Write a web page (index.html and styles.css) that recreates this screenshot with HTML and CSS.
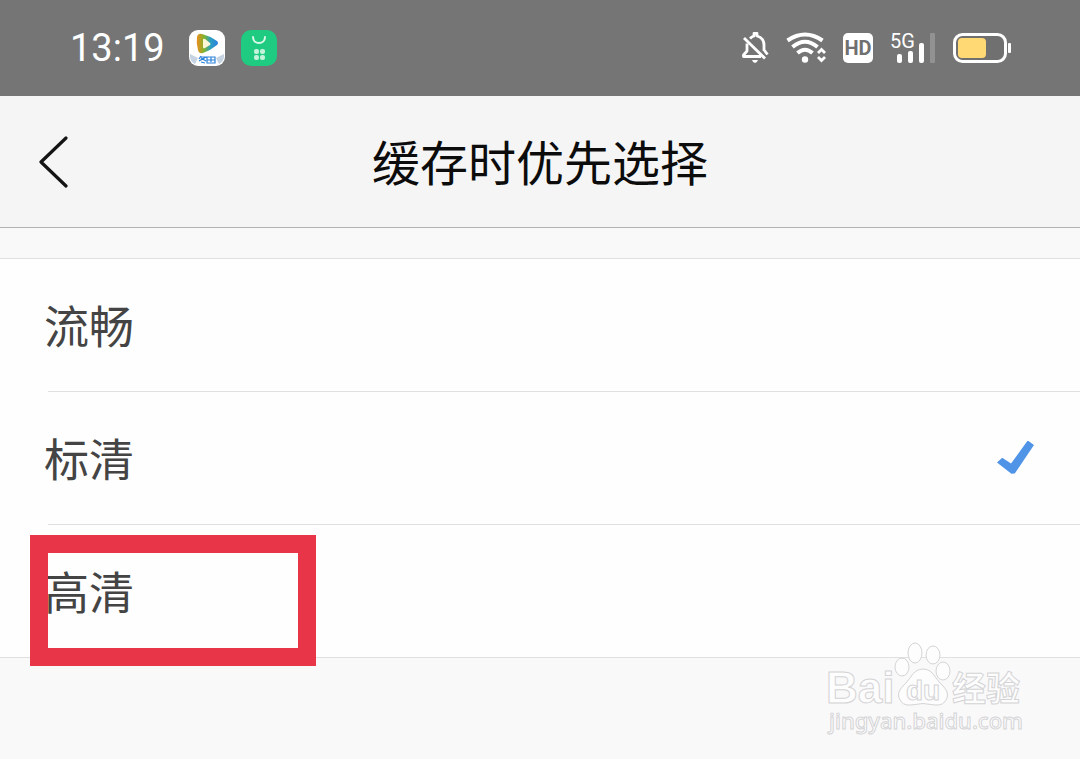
FILE: index.html
```html
<!DOCTYPE html>
<html lang="zh-CN">
<head>
    <meta charset="UTF-8">
    <meta name="viewport" content="width=device-width, initial-scale=1.0">
    <title>缓存时优先选择</title>
    <link rel="stylesheet" href="styles.css">
</head>
<body>
    <!-- Phone status bar -->
    <div class="status-bar">
        <span class="clock">13:19</span>
        <svg class="app-icon" width="36" height="36" viewBox="0 0 36 36">
            <defs>
                <linearGradient id="play" x1="0" y1="0" x2="1" y2="0">
                    <stop offset="0" stop-color="#f08a1c"/>
                    <stop offset="0.35" stop-color="#7fb52e"/>
                    <stop offset="0.65" stop-color="#2c9fc0"/>
                    <stop offset="1" stop-color="#2d7fe0"/>
                </linearGradient>
            </defs>
            <rect width="36" height="36" rx="9" fill="#fff"/>
            <path d="M1 24l8 4-3 6a9 9 0 0 1-5-7zM35 24l-8 4 3 6a9 9 0 0 0 5-7z" fill="#c5d3e2"/>
            <path d="M8 7q1-4 5-3 8 2 15 7 2 2 0 4-6 5-14 8-4 1-5-3-2-7-1-13z" fill="url(#play)"/>
            <path d="M14 10q0-2 2-1l5 4q1 1 0 2l-5 3q-2 1-2-1z" fill="#fff6d8"/>
            <path d="M12 26l-2 3M11 27h6l-7 4M12 28l5 3M12 32l4 1M18 27h8v6h-8zM18 30h8M22 27v5" fill="none" stroke="#2a82d8" stroke-width="1.200"/>
        </svg>
        <svg class="app-icon" width="36" height="36" viewBox="0 0 36 36">
            <rect width="36" height="36" rx="10" fill="#1ecb80"/>
            <path d="M12 7c0 8 12 8 12 0" fill="none" stroke="#d8f8e8" stroke-width="2" stroke-linecap="round"/>
            <g fill="#c4f3dc">
                <rect x="13" y="19" width="5" height="5" rx="2"/>
                <rect x="19" y="19" width="5" height="5" rx="2"/>
                <rect x="13" y="25" width="5" height="5" rx="2"/>
                <rect x="19" y="25" width="5" height="5" rx="2"/>
            </g>
        </svg>

        <div class="indicators">
            <svg width="28" height="32" viewBox="0 0 28 32" fill="none" stroke="#fff" stroke-width="2.800">
                <path d="M9 6.500q2-2 4-2.500V1.500h3V4q7 2 7 9v6M6 11.500V19l-3.500 4v1.500H20M26.500 22.500l-3-4" stroke-linejoin="round"/>
                <path d="M3 6l21 20.500" stroke-width="2.800"/>
                <path d="M11 28h6q-1 3-3 3t-3-3z" fill="#fff" stroke="none"/>
            </svg>
            <svg width="38" height="32" viewBox="1 0 38 32" fill="none" stroke="#fff" overflow="visible">
                <path d="M1.500 8.500Q19-3.500 36.500 8.500" stroke-width="4"/>
                <path d="M6.500 15Q19 4.500 31.500 15" stroke-width="4"/>
                <path d="M11.500 21Q19 14.500 26.500 21" stroke-width="4"/>
                <circle cx="19" cy="27.500" r="3.200" fill="#fff" stroke="none"/>
                <path d="M32 21l3.500-3.500L39 21M32 25l3.500 3.500L39 25" stroke-width="2.800"/>
            </svg>
            <span class="hd">HD</span>
            <div class="signal">
                <span class="network">5G</span>
                <svg width="44" height="32" viewBox="0 0 44 32" fill="#fff">
                    <rect x="6" y="22" width="5" height="9" rx="2"/>
                    <rect x="17" y="19" width="5" height="12" rx="2"/>
                    <rect x="28" y="11" width="5" height="20" rx="2"/>
                    <rect x="39" y="1" width="5" height="30" rx="1" fill="#929292"/>
                </svg>
            </div>
            <svg width="58" height="32" viewBox="0 0 58 32">
                <rect x="1.500" y="2.500" width="51" height="27" rx="8" fill="#707070" stroke="#fff" stroke-width="3"/>
                <rect x="5" y="6" width="28" height="20" rx="4" fill="#ffd973"/>
                <rect x="55" y="11" width="3" height="10" rx="1" fill="#fff"/>
            </svg>
        </div>
    </div>

    <header class="title-bar">
        <button class="back" type="button" aria-label="返回">
            <svg width="30" height="52" viewBox="0 0 30 52" fill="none" stroke="#141414" stroke-width="3.200" stroke-linecap="round" stroke-linejoin="round">
                <path d="M27 2L2 26l25 24"/>
            </svg>
        </button>
        <h1>缓存时优先选择</h1>
    </header>

    <!-- Quality options -->
    <form class="options">
        <label class="option">
            <span class="name">流畅</span>
            <input type="radio" name="quality" value="smooth">
        </label>
        <label class="option">
            <span class="name">标清</span>
            <input type="radio" name="quality" value="sd" checked>
        </label>
        <label class="option marked">
            <span class="name">高清</span>
            <input type="radio" name="quality" value="hd">
        </label>
    </form>

    <!-- Watermark -->
    <svg class="watermark" width="204" height="100" viewBox="0 0 204 100">
        <g class="outline">
            <ellipse cx="80" cy="26" rx="7" ry="9"/>
            <ellipse cx="93" cy="12" rx="7" ry="10"/>
            <ellipse cx="111" cy="14" rx="7" ry="9"/>
            <ellipse cx="121" cy="30" rx="7" ry="9"/>
            <path d="M101 28q-8 0-13 9-3 4-7 8-6 6-4 12 3 8 12 7 12-3 24 0 9 1 12-7 2-6-4-12-4-4-7-8-5-9-13-9z"/>
            <text class="latin" x="4" y="62">Bai</text>
            <text class="du" x="84" y="59">du</text>
            <text class="hanzi" x="130" y="60">经验</text>
            <text class="site" x="7" y="88">jingyan.baidu.com</text>
        </g>
    </svg>
</body>
</html>
```
FILE: styles.css
```css
*, *::before, *::after {
    box-sizing: border-box;
}

body {
    position: relative;
    margin: 0;
    min-height: 100vh;
    background-color: #faf9fa;
    font-family: "Noto Sans CJK SC", "Noto Sans", sans-serif;
}

.status-bar {
    display: flex;
    align-items: center;
    gap: 16px;
    height: 96px;
    padding: 0 69px 0 70px;
    background-color: #757575;
    color: #fff;
}

.clock {
    margin-right: 8px;
    font-family: Roboto, sans-serif;
    font-size: 38px;
    line-height: 40px;
}

.indicators {
    display: flex;
    align-items: center;
    gap: 18px;
    margin-left: auto;
}

.hd {
    width: 30px;
    height: 30px;
    border-radius: 5px;
    background-color: #fff;
    color: #707070;
    font-family: Roboto, sans-serif;
    font-size: 20px;
    font-weight: bold;
    line-height: 30px;
    text-align: center;
}

.signal {
    position: relative;
    height: 32px;
}

.network {
    position: absolute;
    top: -1px;
    left: -1px;
    font-family: Roboto, sans-serif;
    font-size: 20px;
    line-height: 20px;
}

/* Title bar */
.title-bar {
    display: grid;
    grid-template-columns: 108px 1fr 108px;
    align-items: center;
    height: 132px;
    border-bottom: 1px solid #b2b2b2;
    background-color: #f5f5f5;
}

.back {
    display: flex;
    padding: 0 39px;
    border: none;
    background: none;
    cursor: pointer;
}

h1 {
    margin: 0 0 4px;
    color: #0c0c0c;
    font-size: 48px;
    font-weight: 400;
    line-height: 64px;
    text-align: center;
}

/* Option list */
.options {
    margin-top: 30px;
    border-top: 1px solid #e0e0e0;
    border-bottom: 1px solid #e0e0e0;
    background-color: #fefefe;
}

.option {
    position: relative;
    display: flex;
    align-items: center;
    justify-content: space-between;
    height: 132px;
    padding: 0 46px 0 44px;
    cursor: pointer;
}

.option + .option {
    height: 133px;
}

.option + .option::before {
    content: "";
    position: absolute;
    top: 0;
    left: 48px;
    right: 0;
    border-top: 1px solid #e0e0e0;
}

.name {
    color: #444;
    font-size: 45px;
    line-height: 64px;
}

input[type="radio"] {
    appearance: none;
    width: 37px;
    height: 34px;
    margin: 0;
}

input[type="radio"]:checked {
    background-color: #5094e8;
    clip-path: polygon(0 65%, 14% 51%, 38% 68%, 83% 0, 100% 13%, 48% 97%, 39% 98%);
}

.marked::after {
    content: "";
    position: absolute;
    top: 11px;
    left: 30px;
    width: 286px;
    height: 131px;
    border: 18px solid #e83547;
}

/* Watermark */
.watermark {
    position: absolute;
    right: 54px;
    bottom: 18px;
}

.outline {
    fill: #fdfdfd;
    stroke: #d4d4d6;
    stroke-width: 1px;
}

.latin {
    font: bold 44px "Liberation Sans", sans-serif;
}

.du {
    font: bold 28px "Liberation Sans", sans-serif;
}

.hanzi {
    font: bold 34px "Noto Sans CJK SC", sans-serif;
}

.site {
    font: 500 22px "Noto Sans", sans-serif;
}
```
